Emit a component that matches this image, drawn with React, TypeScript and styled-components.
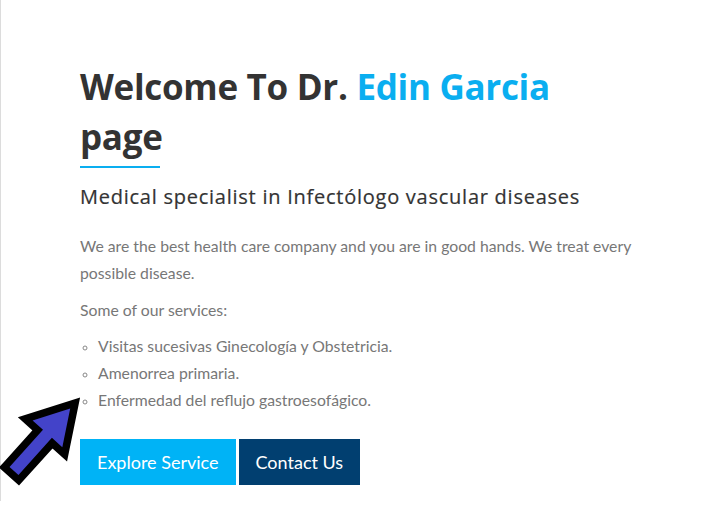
import React from "react";
import styled, { createGlobalStyle } from "styled-components";

const Global = createGlobalStyle`
  html, body { margin: 0; padding: 0; background: #fff; }
  body { font-family: "Lato", "Liberation Sans", sans-serif; }
`;

const Page = styled.div`
  position: relative;
  width: 715px;
  height: 524px;
  overflow: hidden;
`;

const Section = styled.section`
  box-sizing: border-box;
  height: 501px;
  border-left: 1px solid #dcdcdc;
  padding: 62px 0 0 79px;
`;

const Title = styled.h1`
  margin: 0;
  font-family: "Open Sans", "Liberation Sans", sans-serif;
  font-weight: 700;
  font-size: 35px;
  line-height: 50px;
  color: #333;
  letter-spacing: -0.3px;
  width: 520px;
  &::after {
    content: "";
    display: block;
    width: 80px;
    height: 2px;
    margin-top: 4px;
    background: #0aaef0;
  }
`;

const Accent = styled.span`
  color: #0aaef0;
`;

const Subtitle = styled.h2`
  margin: 15px 0 0;
  font-family: "Open Sans", "Liberation Sans", sans-serif;
  font-weight: 500;
  font-size: 20px;
  line-height: 28px;
  letter-spacing: 0.75px;
  color: #333;
  -webkit-text-stroke: 0.2px #333;
`;

const Text = styled.p<{ $top?: number }>`
  margin: ${(p) => p.$top ?? 0}px 0 0;
  font-size: 15.75px;
  line-height: 27px;
  color: #777;
  width: 580px;
`;

const List = styled.ul`
  margin: 9px 0 0;
  padding: 0 0 0 18px;
  list-style: circle;
  font-size: 15.75px;
  line-height: 27px;
  color: #777;
  li::marker { font-size: 13px; color: #888; }
`;

const Buttons = styled.div`
  display: flex;
  gap: 3px;
  margin-top: 26px;
`;

const Button = styled.a<{ $dark?: boolean }>`
  display: inline-flex;
  align-items: center;
  height: 46px;
  padding: 0 17px;
  font-family: "Lato", "Liberation Sans", sans-serif;
  font-size: 18px;
  color: #fff;
  text-decoration: none;
  background: ${(p) => (p.$dark ? "#013f70" : "#00b3f6")};
`;

const ArrowSvg = styled.svg`
  position: absolute;
  left: 0;
  top: 390px;
`;

export default function App() {
  return (
    <Page>
      <Global />
      <Section>
        <Title>
          Welcome To Dr. <Accent>Edin Garcia</Accent> page
        </Title>
        <Subtitle>Medical specialist in Infectólogo vascular diseases</Subtitle>
        <Text $top={21}>
          We are the best health care company and you are in good hands. We treat every
          possible disease.
        </Text>
        <Text $top={10}>Some of our services:</Text>
        <List>
          <li>Visitas sucesivas Ginecología y Obstetricia.</li>
          <li>Amenorrea primaria.</li>
          <li>Enfermedad del reflujo gastroesofágico.</li>
        </List>
        <Buttons>
          <Button href="#">Explore Service</Button>
          <Button href="#" $dark>
            Contact Us
          </Button>
        </Buttons>
      </Section>
      <ArrowSvg width="100" height="110" viewBox="0 0 100 110">
        <g transform="translate(14 81) rotate(-48)">
          <polygon
            points="0,-6 50,-6 50,-20 84,0 50,20 50,6 0,6"
            fill="#000"
            stroke="#000"
            strokeWidth="15"
            strokeLinejoin="miter"
            strokeMiterlimit="10"
          />
          <polygon points="0,-6 50,-6 50,-20 84,0 50,20 50,6 0,6" fill="#4343c9" />
        </g>
      </ArrowSvg>
    </Page>
  );
}
